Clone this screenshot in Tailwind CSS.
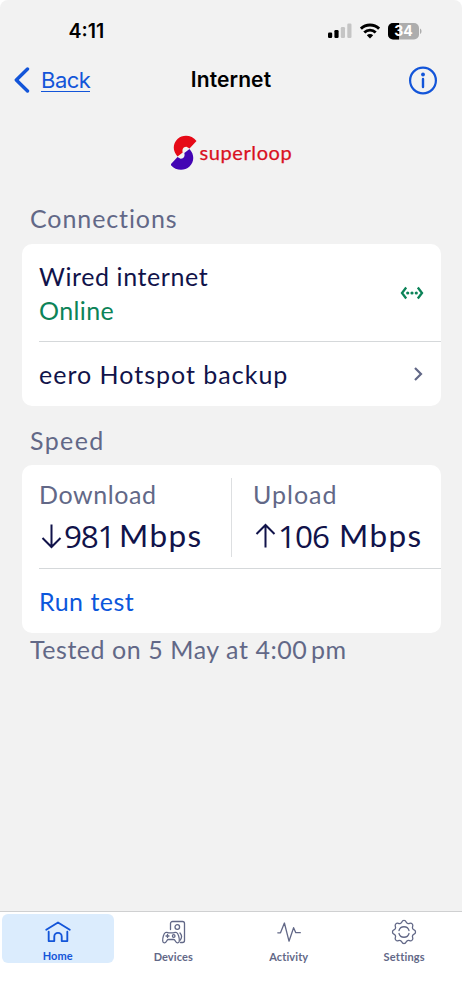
<!DOCTYPE html>
<html lang="en">
<head>
<meta charset="utf-8">
<meta name="viewport" content="width=device-width, initial-scale=1">
<title>Internet</title>
<script src="https://cdn.jsdelivr.net/npm/@tailwindcss/browser@4"></script>
</head>
<body class="bg-white">
<div class="flex h-[1000px] w-[462px] flex-col overflow-hidden rounded-t-lg bg-[#f2f2f2] font-['Lato',sans-serif] text-[25px] leading-[34px] text-[#11134a]">
  <header class="flex h-[110px] shrink-0 flex-col font-['Inter',sans-serif] text-black">
    <div class="flex h-[62px] items-center justify-between pl-[68.5px] pr-[40px]">
      <span class="text-[19.5px] font-semibold">4:11</span>
      <div class="flex items-center gap-[8px]">
        <svg width="24" height="16" viewBox="0 0 24 16"><rect x="0" y="9.5" width="4.2" height="5.5" rx="1.2"/><rect x="6.4" y="7" width="4.2" height="8" rx="1.2"/><rect x="12.8" y="4" width="4.2" height="11" rx="1.2" fill="#c5c5c5"/><rect x="19.3" y="0.5" width="4.2" height="14.5" rx="1.2" fill="#c5c5c5"/></svg>
        <svg width="20" height="16" viewBox="0 0 20 16" fill="none" stroke="#000" stroke-width="2.9"><path d="M.9 5.700a13 13 0 0 1 18.200 0"/><path d="M4.300 9.500a8.100 8.100 0 0 1 11.400 0"/><path d="M10 15.400 6.800 12.200a4.600 4.600 0 0 1 6.400 0z" fill="#000" stroke="none"/></svg>
        <svg width="34" height="17" viewBox="0 0 34 17"><rect width="31" height="16.500" rx="5" fill="#adadad"/><path d="M5 0h6v16.500H5a5 5 0 0 1-5-5V5a5 5 0 0 1 5-5z"/><path d="M32 5.500c2 .8 2 4.700 0 5.500z" fill="#adadad"/><text x="15.600" y="13.300" text-anchor="middle" font-size="14" font-weight="700" fill="#fff">34</text></svg>
      </div>
    </div>
    <div class="grid h-[36px] grid-cols-[1fr_auto_1fr] items-center pl-[14px] pr-[14px]">
      <div class="flex items-center gap-[11px] text-[22px] leading-[24px] text-[#1355d9]">
        <svg width="16" height="26" viewBox="0 0 16 26" fill="none" stroke="#1355d9" stroke-width="3.400" stroke-linecap="round" stroke-linejoin="round"><path d="M13.500 2 2.300 13l11.200 11"/></svg>
        <span class="h-[24px] border-b-[1.5px] border-[#1355d9] tracking-[-0.5px]">Back</span>
      </div>
      <span class="text-center text-[21px] font-semibold tracking-[0.1px]">Internet</span>
      <svg class="mr-[10px] justify-self-end" width="30" height="30" viewBox="0 0 30 30" fill="none" stroke="#1355d9" stroke-width="2.200"><circle cx="15" cy="15.500" r="12.900"/><path d="M15 14v8" stroke-width="2.400" stroke-linecap="round"/><circle cx="15" cy="9.500" r="1.900" fill="#1355d9" stroke="none"/></svg>
    </div>
  </header>
  <main class="flex grow flex-col px-[21.5px]">
    <div class="flex h-[91px] items-start pt-[25px] pl-[149.5px] text-[#d9101e]">
      <svg width="26" height="36" viewBox="0 0 26 36"><path d="M25.500 6C21 0 12-1 6.500 4 1.500 9 1.500 16 6.500 21.500l5.200-4c-1-3.500.8-5.700 3.800-5.700l3 1.700z" fill="#e60a17"/><path transform="rotate(180 12.500 17.800)" d="M25.500 6C21 0 12-1 6.500 4 1.500 9 1.500 16 6.500 21.500l5.200-4c-1-3.500.8-5.700 3.800-5.700l3 1.700z" fill="#4304b4"/></svg>
      <span class="pl-[2.5px] text-[20px] leading-[34px] tracking-[0.6px] [-webkit-text-stroke:0.25px_#d9101e]">superloop</span>
    </div>
    <h2 class="h-[43px] pl-[8.5px] tracking-[0.9px] text-[#626887]">Connections</h2>
    <section class="h-[161.5px] rounded-[10px] bg-white pl-[17.5px]">
      <div class="flex h-[98px] items-center justify-between border-b-[1.5px] border-[#d5d8da] pr-[17px]">
        <div><div class="tracking-[0.6px]">Wired internet</div><div class="tracking-[0.4px] text-[#0c8358]">Online</div></div>
        <svg width="24" height="14" viewBox="0 0 24 14" fill="none" stroke="#0c8358" stroke-width="2.300"><path d="M6.200 1.500 2 7l4.200 5.500M17.800 1.500 22 7l-4.200 5.500"/><g fill="#0c8358" stroke="none"><circle cx="7.700" cy="7" r="1.600"/><circle cx="12" cy="7" r="1.600"/><circle cx="16.300" cy="7" r="1.600"/></g></svg>
      </div>
      <div class="flex h-[63px] items-center justify-between pr-4"><span class="tracking-[1px]">eero Hotspot backup</span>
        <svg width="12" height="16" viewBox="0 0 12 16" fill="none" stroke="#626887" stroke-width="2.200"><path d="m2 2 6 6-6 6"/></svg></div>
    </section>
    <h2 class="h-[59.5px] pt-[17px] pl-[8.5px] tracking-[1.4px] text-[#626887]">Speed</h2>
    <section class="h-[168px] rounded-[10px] bg-white pl-[17.5px]">
      <div class="flex h-[104px] border-b-[1.5px] border-[#d5d8da] pt-[13px]">
        <div class="h-[79px] w-[193px] border-r-[1.5px] border-[#dddfe1]"><div class="h-[34px] leading-[32px] tracking-[0.6px] text-[#626887]">Download</div>
          <div class="flex text-[31.5px] leading-[47px]"><svg width="25" height="46" viewBox="0 0 25 46" fill="none" stroke="#11134a" stroke-width="2"><path d="M12.500 12.500V35M3.500 26l9 9 9-9"/></svg><span class="w-[54px] tracking-[-1.2px] font-['Open_Sans']">981</span><span class="pl-[1px] tracking-[1.4px]">Mbps</span></div></div>
        <div class="pl-[21px]"><div class="h-[34px] leading-[32px] tracking-[1px] text-[#626887]">Upload</div>
          <div class="flex text-[31.5px] leading-[47px]"><svg width="25" height="46" viewBox="0 0 25 46" fill="none" stroke="#11134a" stroke-width="2"><path d="M12.500 35.500V13M3.500 22l9-9 9 9"/></svg><span class="w-[54px] tracking-[-1px] font-['Open_Sans']">106</span><span class="pl-[7px] tracking-[1.400px]">Mbps</span></div></div>
      </div>
      <div class="flex h-[64px] items-center tracking-[0.5px] text-[#0b57dc]">Run test</div>
    </section>
    <p class="pl-[8.5px] leading-[32px] tracking-[0.55px] text-[#626887]">Tested on 5 May at 4:00&#8201;pm</p>
  </main>
  <nav class="grid h-[89px] shrink-0 grid-cols-4 border-t-[1.5px] border-[#cfd0d1] bg-white text-[11px] leading-[14px] font-bold tracking-[0.1px] text-[#626887]">
    <a class="ml-[2px] mr-[2px] mt-[2px] flex h-[49px] flex-col items-center gap-[4.5px] rounded-md bg-[#dbecfd] pt-[5px] text-[#1355d9]">
      <svg width="28" height="26" viewBox="0 0 28 26" fill="none" stroke="#1355d9" stroke-width="1.900" stroke-linecap="round" stroke-linejoin="round"><path d="M2 11 14 3.500 26 11M4.500 13v9.500h5.700V18a3.800 3.800 0 0 1 7.600 0v4.500h5.700V13"/></svg>Home</a>
    <a class="mt-[2px] flex flex-col items-center gap-[4.5px] pt-[5px]">
      <svg width="26" height="26" viewBox="0 0 26 26" fill="none" stroke="#626887" stroke-width="1.300" stroke-linecap="round"><path d="M10.500 10.500V4.500a2 2 0 0 1 2-2h10a2 2 0 0 1 2 2v17a2 2 0 0 1-2 2h-2M20 14c1.800 2 1.800 5 .3 7"/><circle cx="17.300" cy="8" r="2.300"/><path d="M5.500 13.500c1.500-.6 2.500.3 3.500.3h4c1 0 2-1 3.500-.3 1.700.8 3 5.500 2.800 8.500-.3 2.800-2.800 2.200-3.800.3-.7-1.300-1-1.800-1.800-1.800H8.300c-.8 0-1.100.5-1.800 1.800-1 1.900-3.500 2.500-3.800-.3-.2-3 1.100-7.700 2.800-8.500zM6 17h3M7.500 15.500v3"/><circle cx="13.700" cy="17" r="1.300"/></svg>Devices</a>
    <a class="mt-[2px] flex flex-col items-center gap-[4.5px] pt-[5px]">
      <svg width="26" height="26" viewBox="0 0 26 26" fill="none" stroke="#626887" stroke-width="1.300" stroke-linecap="round" stroke-linejoin="round"><path d="M1.800 13.800h2.700L8.400 4 13 22.200l4.600-13.500 2.200 5h4.500"/></svg>Activity</a>
    <a class="mt-[2px] flex flex-col items-center gap-[4.5px] pt-[5px] tracking-[0.2px]">
      <svg width="26" height="26" viewBox="0 0 26 26" fill="none" stroke="#626887" stroke-width="1.300" stroke-linecap="round"><path d="M10.860 2.930A2.300 2.300 0 0 1 15.140 2.930A2.600 2.600 0 0 0 18.610 4.360A2.300 2.300 0 0 1 21.640 7.390A2.600 2.600 0 0 0 23.070 10.860A2.300 2.300 0 0 1 23.070 15.140A2.600 2.600 0 0 0 21.640 18.610A2.300 2.300 0 0 1 18.610 21.640A2.600 2.600 0 0 0 15.140 23.070A2.300 2.300 0 0 1 10.860 23.070A2.600 2.600 0 0 0 7.390 21.640A2.300 2.300 0 0 1 4.360 18.610A2.600 2.600 0 0 0 2.930 15.140A2.300 2.300 0 0 1 2.930 10.860A2.600 2.600 0 0 0 4.360 7.390A2.300 2.300 0 0 1 7.390 4.360A2.600 2.600 0 0 0 10.860 2.930z"/><path d="M8 11.500a5.200 5.200 0 0 1 10 0M18 14.500a5.200 5.200 0 0 1-10 0"/></svg>Settings</a>
  </nav>
</div>
</body>
</html>
